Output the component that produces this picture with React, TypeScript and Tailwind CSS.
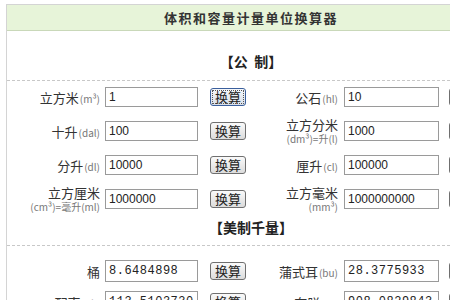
import React from 'react';

const cjk = { fontFamily: '"Noto Sans CJK SC", "Liberation Sans", sans-serif' };

interface Field {
  name: string;
  unit?: string;
  sub?: React.ReactNode;
  value: string;
}

function Label({ field }: { field: Field }) {
  if (field.sub) {
    return (
      <div className="flex flex-col items-end">
        <span className="text-[13px] leading-[13px] text-[#333]">{field.name}</span>
        <span className="text-[10px] leading-[11px] text-[#777] mt-[2px]">{field.sub}</span>
      </div>
    );
  }
  return (
    <div className="flex items-baseline justify-end leading-none">
      <span className="text-[13px] leading-none text-[#333]">{field.name}</span>
      {field.unit && <span className="text-[10px] leading-none text-[#777] ml-[1px]">{field.unit}</span>}
    </div>
  );
}

function ConvertButton({ focused }: { focused?: boolean }) {
  return (
    <button
      className={
        focused
          ? 'h-[18px] w-[36px] shrink-0 p-0 rounded-[3px] border border-[#3a5f9c] bg-gradient-to-b from-[#f6f8fb] to-[#d8dfe9] text-[13px] leading-[16px] text-[#222] outline-1 outline-dotted outline-[#555] -outline-offset-3'
          : 'h-[18px] w-[36px] shrink-0 p-0 rounded-[3px] border border-[#6f6f6f] bg-gradient-to-b from-[#fafafa] to-[#dcdcdc] text-[13px] leading-[16px] text-[#222]'
      }
      style={cjk}
    >
      换算
    </button>
  );
}

function Row({ left, right, mono, focused }: { left: Field; right: Field; mono?: boolean; focused?: boolean }) {
  const inputCls = mono
    ? 'h-[22px] border border-[#9a9a9a] bg-white px-[3px] text-[12px] leading-none text-[#222] outline-none'
    : 'h-[20px] border border-[#9a9a9a] bg-white px-[3px] text-[12px] leading-none text-[#222] outline-none';
  const inputFont = mono
    ? { fontFamily: '"Liberation Mono", monospace', letterSpacing: '0.5px' }
    : { fontFamily: '"Liberation Sans", sans-serif' };
  return (
    <div className={mono ? 'flex items-center h-[22px]' : 'flex items-center h-[20px]'}>
      <div className="w-[93px] shrink-0">
        <Label field={left} />
      </div>
      <input className={`ml-[5px] w-[93px] shrink-0 ${inputCls}`} style={inputFont} defaultValue={left.value} />
      <div className="ml-[12px] flex">
        <ConvertButton focused={focused} />
      </div>
      <div className="w-[92px] shrink-0">
        <Label field={right} />
      </div>
      <input className={`ml-[6px] w-[95px] shrink-0 ${inputCls}`} style={inputFont} defaultValue={right.value} />
      <div className="ml-[10px] flex">
        <ConvertButton />
      </div>
    </div>
  );
}

function Section({ title, className }: { title: string; className: string }) {
  return (
    <div className={`flex justify-center items-end ${className}`}>
      <span className="text-[14px] leading-none font-bold text-[#222] whitespace-pre" style={cjk}>
        {title}
      </span>
    </div>
  );
}

function Dashed() {
  return <div className="border-t border-dashed border-[#c8c8c8]" />;
}

export default function App() {
  return (
    <div className="w-[450px] h-[300px] overflow-hidden bg-white" style={cjk}>
      <div className="ml-[6px] mt-[4px] w-[490px] border border-[#d4d4d4] border-b-0">
        <div className="h-[26px] flex items-center justify-center bg-[#e7f4d9] border-b border-[#c9d8b9]">
          <span className="text-[13px] leading-none font-bold text-[#333] tracking-[1.5px]">体积和容量计量单位换算器</span>
        </div>
        <Section title="【公  制】" className="h-[49px] pb-[12px]" />
        <Dashed />
        <div className="flex flex-col gap-[14px] pt-[6px]">
          <Row
            focused
            left={{ name: '立方米', unit: '(m³)', value: '1' }}
            right={{ name: '公石', unit: '(hl)', value: '10' }}
          />
          <Row
            left={{ name: '十升', unit: '(dal)', value: '100' }}
            right={{ name: '立方分米', sub: '(dm³)=升(l)', value: '1000' }}
          />
          <Row
            left={{ name: '分升', unit: '(dl)', value: '10000' }}
            right={{ name: '厘升', unit: '(cl)', value: '100000' }}
          />
          <Row
            left={{ name: '立方厘米', sub: '(cm³)=毫升(ml)', value: '1000000' }}
            right={{ name: '立方毫米', sub: '(mm³)', value: '1000000000' }}
          />
        </div>
        <Section title="【美制千量】" className="h-[36px] pb-[11px]" />
        <Dashed />
        <div className="flex flex-col gap-[9px] pt-[14px]">
          <Row
            mono
            left={{ name: '桶', value: '8.6484898' }}
            right={{ name: '蒲式耳', unit: '(bu)', value: '28.3775933' }}
          />
          <Row
            mono
            left={{ name: '配克', unit: '(pk)', value: '113.5103730' }}
            right={{ name: '夸脱', unit: '(qt)', value: '908.0829843' }}
          />
        </div>
      </div>
    </div>
  );
}
